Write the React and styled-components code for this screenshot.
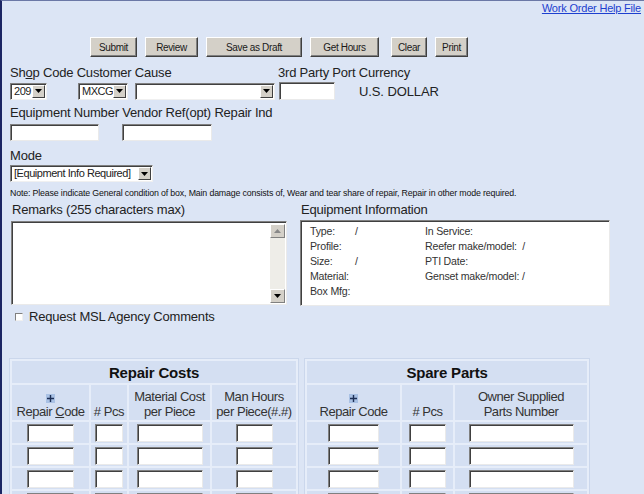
import React from "react";
import styled, { createGlobalStyle } from "styled-components";

const GlobalStyle = createGlobalStyle`
  html, body {
    margin: 0;
    padding: 0;
    background: #dce5f5;
    overflow: hidden;
  }
  body {
    font-family: "Liberation Sans", Arial, sans-serif;
    color: #1e1e1e;
  }
`;

const Page = styled.div`
  box-sizing: border-box;
  height: 494px;
  border-left: 2px solid #1b2563;
  border-top: 1px solid #6b78a6;
  padding: 0 0 0 8px;
  overflow: hidden;
`;

const TopBar = styled.div`
  display: flex;
  justify-content: flex-end;
  padding: 1px 3px 0 0;
  height: 15px;
`;

const HelpLink = styled.a`
  font-size: 11px;
  letter-spacing: -0.2px;
  color: #1d3fcf;
  text-decoration: underline;
  cursor: pointer;
`;

const Toolbar = styled.div`
  display: flex;
  gap: 8px;
  margin-top: 20px;
  padding-left: 80px;
`;

const Button = styled.button`
  box-sizing: border-box;
  width: ${({ $w }) => $w}px;
  margin-left: ${({ $ml }) => $ml || 0}px;
  height: 20px;
  padding: 0;
  font-family: "Liberation Sans", Arial, sans-serif;
  font-size: 10px;
  letter-spacing: -0.35px;
  color: #1a1a1a;
  background: #d4d0c8;
  border: 1px solid;
  border-color: #ffffff #404040 #404040 #ffffff;
  box-shadow: inset -1px -1px #808080;
`;

const LabelRow = styled.div`
  display: grid;
  grid-template-columns: ${({ $cols }) => $cols || "auto"};
  margin-top: ${({ $mt }) => $mt}px;
  font-size: 13px;
  line-height: 15px;
  letter-spacing: -0.2px;
  color: #222;
`;

const FieldRow = styled.div`
  display: grid;
  grid-template-columns: ${({ $cols }) => $cols};
  align-items: center;
  margin-top: ${({ $mt }) => $mt}px;
`;

const SelectBox = styled.div`
  box-sizing: border-box;
  display: flex;
  width: ${({ $w }) => $w}px;
  height: 17px;
  background: #fff;
  border: 1px solid;
  border-color: #808080 #f0f0f0 #f0f0f0 #808080;
  box-shadow: inset 1px 1px #404040;
`;

const SelectText = styled.span`
  flex: 1;
  padding: 1px 0 0 3px;
  font-size: 11px;
  line-height: 13px;
  letter-spacing: -0.45px;
  color: #222;
  white-space: nowrap;
  overflow: hidden;
`;

const ArrowBtn = styled.span`
  box-sizing: border-box;
  display: flex;
  align-items: center;
  justify-content: center;
  width: 13px;
  margin: 1px 1px 1px 0;
  background: #d4d0c8;
  border: 1px solid;
  border-color: #ffffff #404040 #404040 #ffffff;
`;

const TextBox = styled.input`
  box-sizing: border-box;
  display: block;
  width: ${({ $w }) => $w}px;
  height: ${({ $h }) => $h || 18}px;
  margin: ${({ $inline }) => ($inline ? "0" : "0 auto")};
  padding: 0;
  background: #fff;
  border: 1px solid;
  border-color: #808080 #eaeaea #eaeaea #808080;
  box-shadow: inset 1px 1px #404040;
  outline: none;
`;

const Currency = styled.span`
  font-size: 13px;
  letter-spacing: -0.1px;
  color: #222;
`;

const Note = styled.div`
  margin-top: 6px;
  font-size: 8.8px;
  line-height: 10px;
  letter-spacing: -0.15px;
  color: #111;
  white-space: nowrap;
`;

const TwoPanels = styled.div`
  display: grid;
  grid-template-columns: 290px 312px;
  margin-top: 4px;
`;

const PanelLabel = styled.div`
  font-size: 13px;
  line-height: 15px;
  letter-spacing: -0.2px;
  color: #222;
  padding-left: ${({ $pl }) => $pl || 0}px;
  margin-bottom: 4px;
`;

const RemarksBox = styled.div`
  box-sizing: border-box;
  display: flex;
  width: 276px;
  height: 84px;
  margin-left: 1px;
  background: #fff;
  border: 1px solid;
  border-color: #808080 #eaeaea #eaeaea #808080;
  box-shadow: inset 1px 1px #404040;
`;

const RemarksArea = styled.div`
  flex: 1;
`;

const ScrollBar = styled.div`
  display: flex;
  flex-direction: column;
  justify-content: space-between;
  width: 15px;
  margin: 2px 1px 1px 0;
  background: #eeede8;
`;

const ScrollBtn = styled.span`
  box-sizing: border-box;
  display: flex;
  align-items: center;
  justify-content: center;
  height: 14px;
  background: #d4d0c8;
  border: 1px solid;
  border-color: #ffffff #808080 #808080 #ffffff;
`;

const EquipBox = styled.div`
  box-sizing: border-box;
  width: 310px;
  height: 86px;
  margin-top: -1px;
  padding: 3px 0 0 9px;
  background: #fff;
  border: 1px solid;
  border-color: #808080 #eaeaea #eaeaea #808080;
  box-shadow: inset 1px 1px #404040;
  display: grid;
  grid-template-columns: 45px 70px auto;
  grid-auto-rows: 15px;
  font-size: 10.6px;
  line-height: 15px;
  letter-spacing: -0.2px;
  color: #333;
`;

const CheckRow = styled.label`
  display: flex;
  align-items: center;
  gap: 6px;
  margin-top: 3px;
  padding-left: 5px;
  font-size: 13px;
  line-height: 15px;
  letter-spacing: -0.2px;
  color: #222;
`;

const CheckBox = styled.span`
  box-sizing: border-box;
  width: 8px;
  height: 8px;
  background: #fff;
  border: 1px solid;
  border-color: #808080 #f0f0f0 #f0f0f0 #808080;
`;

const Tables = styled.div`
  display: flex;
  align-items: flex-start;
  gap: 5px;
  margin-top: 34px;
  margin-left: -1px;
`;

const Grid = styled.table`
  box-sizing: border-box;
  border-collapse: separate;
  border-spacing: 2px;
  background: #e6edf9;
  border: 1px solid #cbd7ec;
  table-layout: fixed;
  width: ${({ $w }) => $w}px;
`;

const Col = styled.col`
  width: ${({ $w }) => $w}px;
`;

const Caption = styled.th`
  height: 22px;
  padding: 0;
  background: #d4dff2;
  font-size: 15px;
  font-weight: bold;
  letter-spacing: -0.2px;
  color: #111;
`;

const HeadCell = styled.th`
  height: 34px;
  padding: 0 0 1px;
  vertical-align: bottom;
  background: #d4dff2;
  font-size: 13px;
  font-weight: normal;
  line-height: 15px;
  letter-spacing: -0.45px;
  color: #333;
  white-space: nowrap;
`;

const DataCell = styled.td`
  height: 21px;
  padding: 0;
  background: #d4dff2;
  vertical-align: middle;
`;

const AddIcon = styled.span`
  display: block;
  width: 9px;
  height: 9px;
  margin: 0 auto 4px;
`;

const DownArrow = () => (
  <svg width="7" height="4" viewBox="0 0 7 4">
    <path d="M0 0h7L3.5 4z" fill="#000" />
  </svg>
);

const UpArrow = () => (
  <svg width="7" height="4" viewBox="0 0 7 4">
    <path d="M0 4h7L3.5 0z" fill="#888" />
  </svg>
);

const Plus = () => (
  <AddIcon>
    <svg width="9" height="9" viewBox="0 0 9 9">
      <rect width="9" height="9" fill="#a9c1e4" />
      <path d="M4.5 1v7M1 4.5h7" stroke="#1c2e55" strokeWidth="1.4" />
    </svg>
  </AddIcon>
);

const Select = ({ width, value }) => (
  <SelectBox $w={width}>
    <SelectText>{value}</SelectText>
    <ArrowBtn>
      <DownArrow />
    </ArrowBtn>
  </SelectBox>
);

const equipInfo = [
  ["Type:", "/", "In Service:"],
  ["Profile:", "", "Reefer make/model:  /"],
  ["Size:", "/", "PTI Date:"],
  ["Material:", "", "Genset make/model: /"],
  ["Box Mfg:", "", ""],
];

const repairCols = [77, 36, 81, 84];
const repairInputs = [47, 28, 66, 37];
const spareCols = [93, 51, 132];
const spareInputs = [51, 37, 105];
const rows = [0, 1, 2, 3, 4];

const App = () => {
  return (
    <>
      <GlobalStyle />
      <Page>
        <TopBar>
          <HelpLink>Work Order Help File</HelpLink>
        </TopBar>

        <Toolbar>
          <Button $w={47}>Submit</Button>
          <Button $w={53}>Review</Button>
          <Button $w={96}>Save as Draft</Button>
          <Button $w={69}>Get Hours</Button>
          <Button $w={36} $ml={4}>Clear</Button>
          <Button $w={33}>Print</Button>
        </Toolbar>

        <LabelRow $mt={8} $cols="268px auto">
          <span>
            Sh<u>o</u>p Code Customer Cause
          </span>
          <span>3rd Party Port Currency</span>
        </LabelRow>

        <FieldRow $mt={2} $cols="68px 57px 144px 80px auto">
          <Select width={37} value="209" />
          <Select width={50} value="MXCG" />
          <Select width={140} value="" />
          <TextBox $w={56} $h={18} $inline />
          <Currency>U.S. DOLLAR</Currency>
        </FieldRow>

        <LabelRow $mt={5}>
          <span>Equipment Number Vendor Ref(opt) Repair Ind</span>
        </LabelRow>

        <FieldRow $mt={4} $cols="112px auto">
          <TextBox $w={89} $h={17} $inline />
          <TextBox $w={90} $h={17} $inline />
        </FieldRow>

        <LabelRow $mt={7}>
          <span>Mode</span>
        </LabelRow>

        <FieldRow $mt={2} $cols="auto">
          <Select width={143} value="[Equipment Info Required]" />
        </FieldRow>

        <Note>
          Note: Please indicate General condition of box, Main damage consists of, Wear and tear
          share of repair, Repair in other mode required.
        </Note>

        <TwoPanels>
          <div>
            <PanelLabel $pl={2}>Remarks (255 characters max)</PanelLabel>
            <RemarksBox>
              <RemarksArea />
              <ScrollBar>
                <ScrollBtn>
                  <UpArrow />
                </ScrollBtn>
                <ScrollBtn>
                  <DownArrow />
                </ScrollBtn>
              </ScrollBar>
            </RemarksBox>
          </div>
          <div>
            <PanelLabel $pl={1}>Equipment Information</PanelLabel>
            <EquipBox>
              {equipInfo.map(([a, b, c]) => (
                <React.Fragment key={a}>
                  <span>{a}</span>
                  <span>{b}</span>
                  <span style={{ whiteSpace: "pre" }}>{c}</span>
                </React.Fragment>
              ))}
            </EquipBox>
          </div>
        </TwoPanels>

        <CheckRow>
          <CheckBox />
          Request MSL Agency Comments
        </CheckRow>

        <Tables>
          <Grid $w={290}>
            <colgroup>
              {repairCols.map((w, i) => (
                <Col key={i} $w={w} />
              ))}
            </colgroup>
            <thead>
              <tr>
                <Caption colSpan={4}>Repair Costs</Caption>
              </tr>
              <tr>
                <HeadCell>
                  <Plus />
                  Repair <u>C</u>ode
                </HeadCell>
                <HeadCell># Pcs</HeadCell>
                <HeadCell>
                  Material Cost
                  <br />
                  per Piece
                </HeadCell>
                <HeadCell>
                  Man Hours
                  <br />
                  per Piece(#.#)
                </HeadCell>
              </tr>
            </thead>
            <tbody>
              {rows.map((r) => (
                <tr key={r}>
                  {repairInputs.map((w, i) => (
                    <DataCell key={i}>
                      <TextBox $w={w} />
                    </DataCell>
                  ))}
                </tr>
              ))}
            </tbody>
          </Grid>

          <Grid $w={286}>
            <colgroup>
              {spareCols.map((w, i) => (
                <Col key={i} $w={w} />
              ))}
            </colgroup>
            <thead>
              <tr>
                <Caption colSpan={3}>Spare Parts</Caption>
              </tr>
              <tr>
                <HeadCell>
                  <Plus />
                  Repair Code
                </HeadCell>
                <HeadCell># Pcs</HeadCell>
                <HeadCell>
                  Owner Supplied
                  <br />
                  Parts Number
                </HeadCell>
              </tr>
            </thead>
            <tbody>
              {rows.map((r) => (
                <tr key={r}>
                  {spareInputs.map((w, i) => (
                    <DataCell key={i}>
                      <TextBox $w={w} />
                    </DataCell>
                  ))}
                </tr>
              ))}
            </tbody>
          </Grid>
        </Tables>
      </Page>
    </>
  );
};

export default App;
